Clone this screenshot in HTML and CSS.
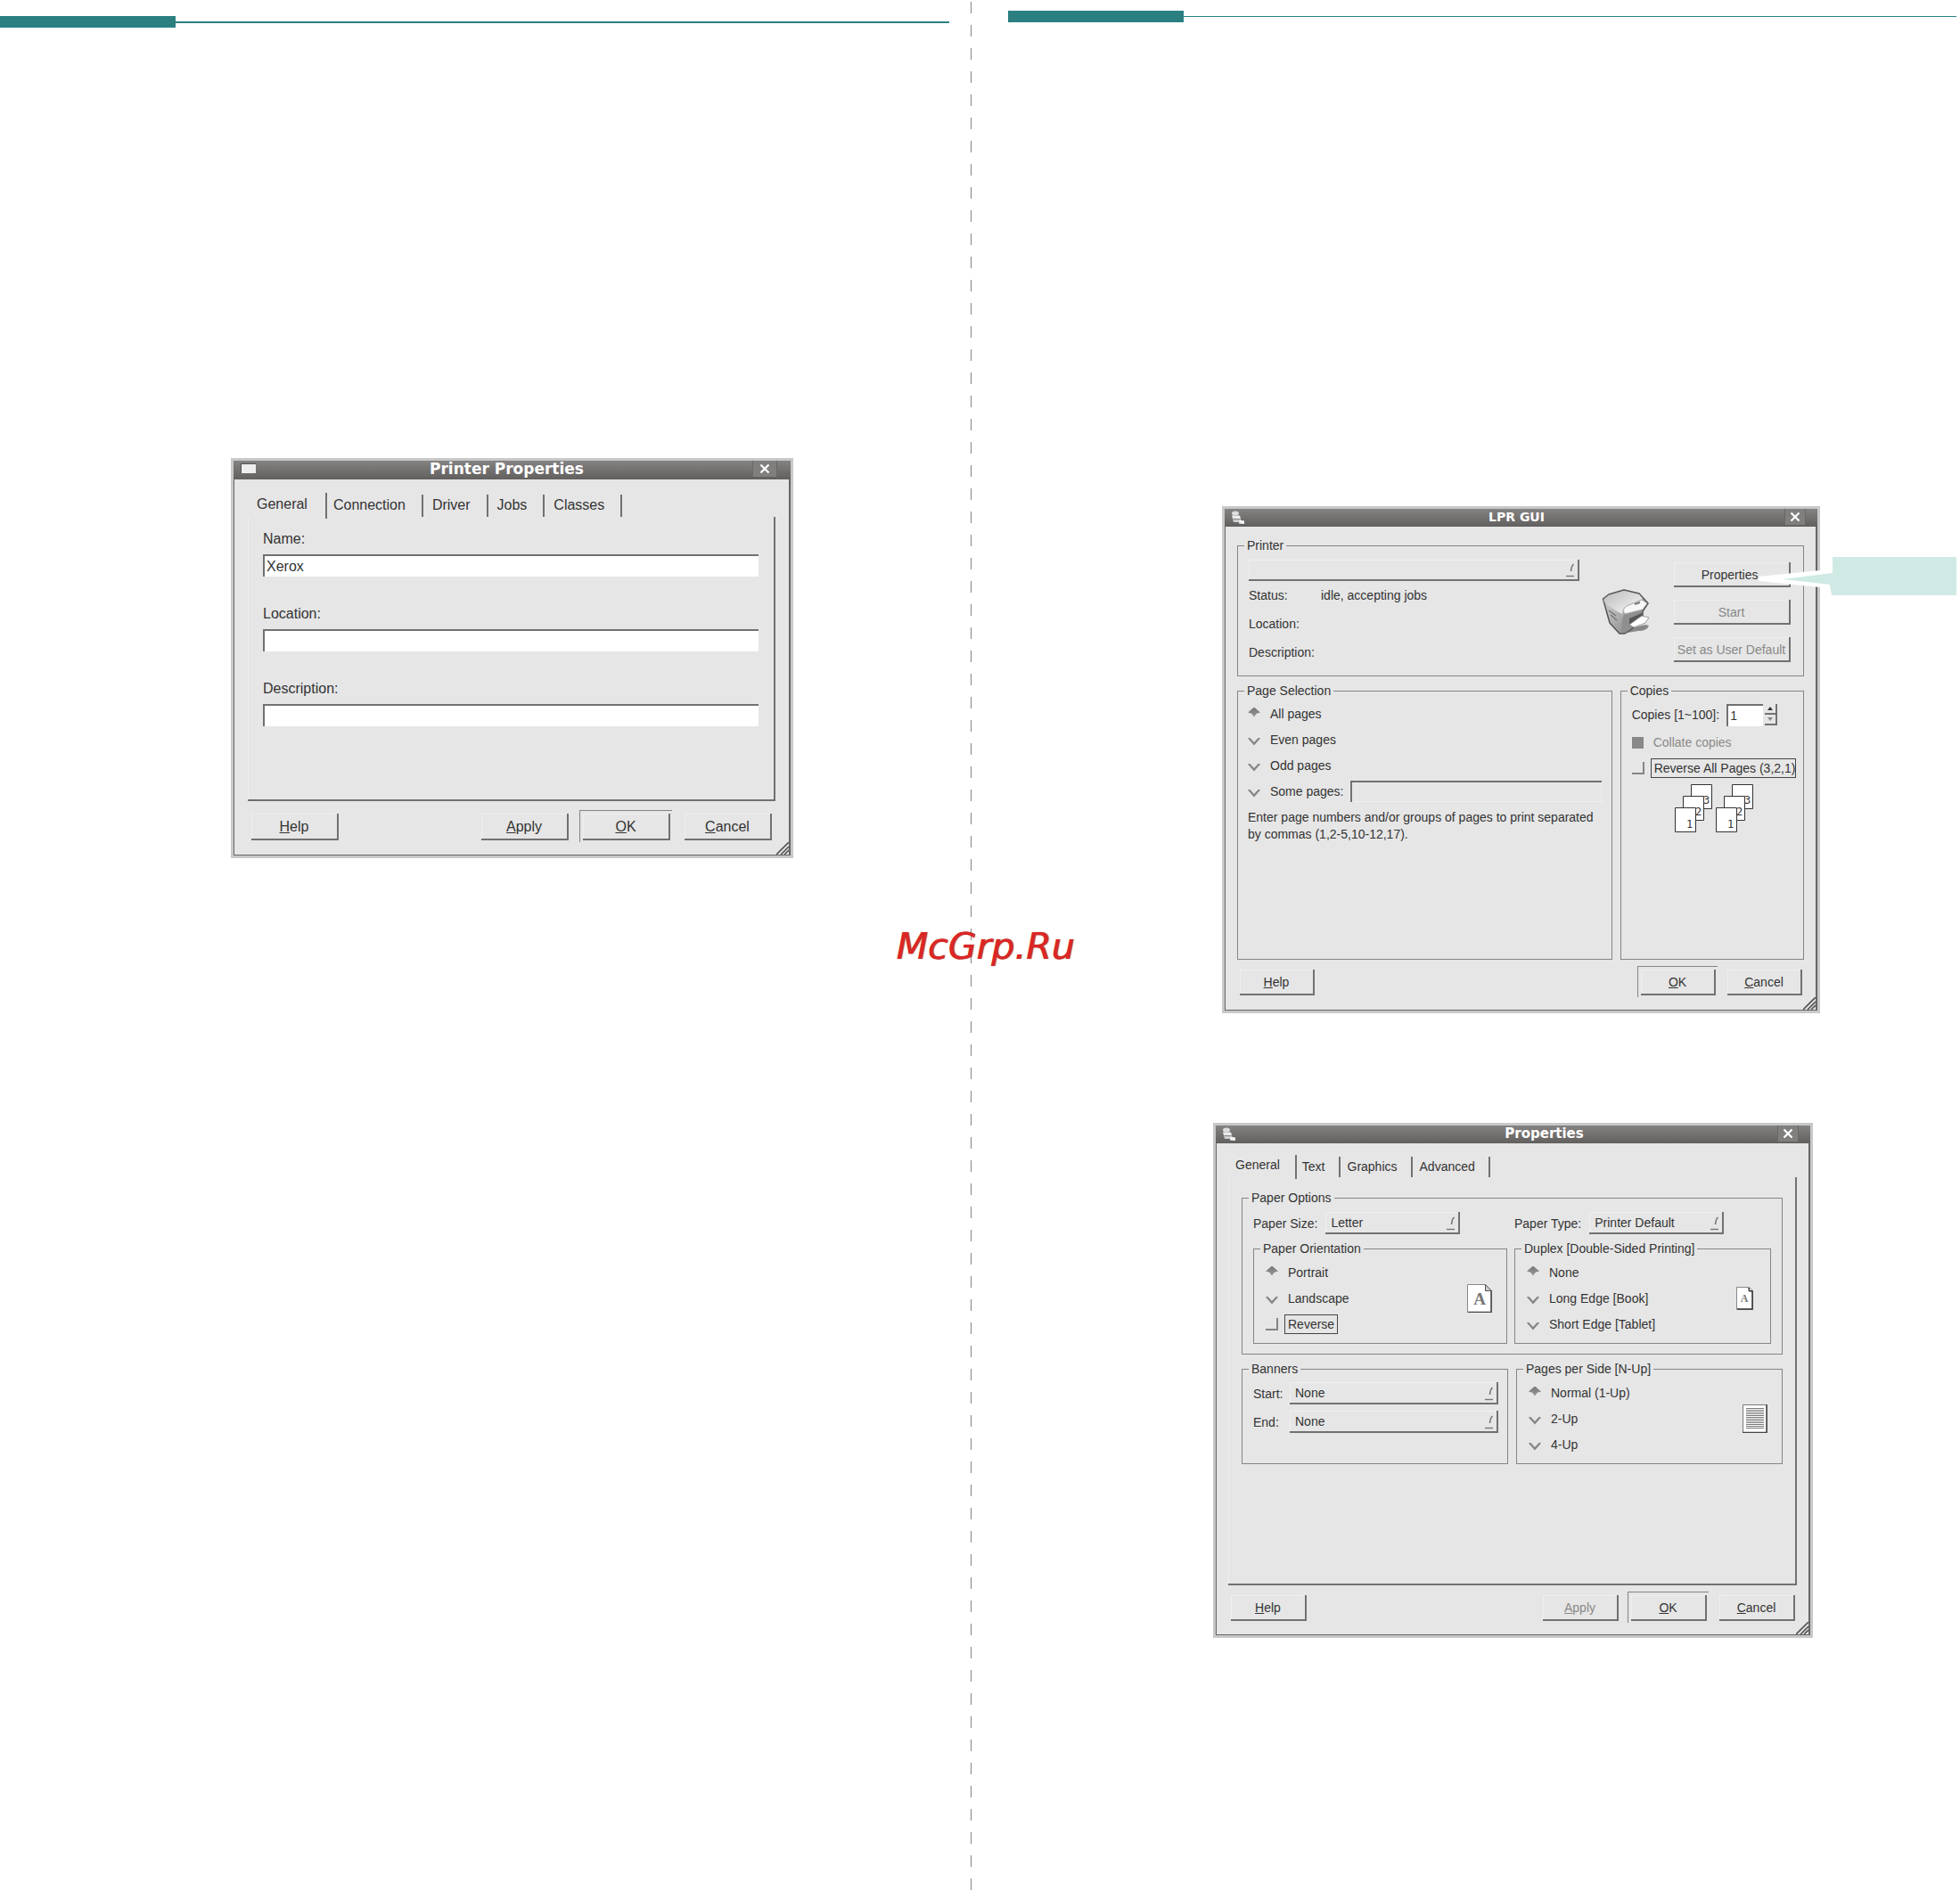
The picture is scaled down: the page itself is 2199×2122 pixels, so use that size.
FILE: index.html
```
<!DOCTYPE html>
<html lang="en">
<head>
<meta charset="utf-8">
<title>Printer configuration</title>
<link rel="stylesheet" href="styles.css">
</head>
<body>
<svg class="defs" aria-hidden="true">
  <symbol id="cross" viewBox="0 0 12 12"><path d="M1.5 1.5l9 9M10.5 1.5l-9 9" stroke="#fff" stroke-width="2.2" fill="none"/></symbol>
  <symbol id="arrow" viewBox="0 0 10 16"><path d="M8.5 1Q6 3 5.500 9" stroke="#777" stroke-width="1.6" fill="none"/><path d="M0 14.500H9" stroke="#777" stroke-width="1.4"/></symbol>
  <symbol id="grip" viewBox="0 0 14 14"><path d="M0 14L14 0M5 14L14 5M9 14L14 9" stroke="#555" stroke-width="1.6"/></symbol>
  <symbol id="app" viewBox="0 0 16 16">
    <ellipse cx="5" cy="3" rx="4" ry="2.500" fill="#ddd"/><path d="M1 5.500h9l1 3.500H2z" fill="#eee"/><path d="M2 9.500h9l1 3.500H3z" fill="#ccc"/><path d="M9.500 10.500l5.500 1v3.500l-6-.5z" fill="#f4f4f4"/><path d="M3 9.200l7 .5" stroke="#888"/>
  </symbol>
</svg>
<main class="spread">
  <section class="sheet sheet-left">
    <div class="rule"></div>
    <form class="window win-printer">
      <div class="frame">
        <header class="titlebar">
          <span class="menu-icon"></span>
          <h2>Printer Properties</h2>
          <button type="button" class="close" aria-label="Close"><svg><use href="#cross"/></svg></button>
        </header>
        <div class="body">
          <div class="tabs" role="tablist">
            <button type="button" role="tab" aria-selected="true">General</button>
            <button type="button" role="tab">Connection</button>
            <button type="button" role="tab">Driver</button>
            <button type="button" role="tab">Jobs</button>
            <button type="button" role="tab">Classes</button>
          </div>
          <div class="panel">
            <div class="field"><label for="name">Name:</label><input class="sunk" id="name" type="text" value="Xerox"></div>
            <div class="field"><label for="location">Location:</label><input class="sunk" id="location" type="text"></div>
            <div class="field"><label for="description">Description:</label><input class="sunk" id="description" type="text"></div>
          </div>
          <footer class="actions">
            <button type="button" class="push help"><u>H</u>elp</button>
            <button type="button" class="push"><u>A</u>pply</button>
            <button type="button" class="push default"><u>O</u>K</button>
            <button type="button" class="push"><u>C</u>ancel</button>
          </footer>
        </div>
        <svg class="grip"><use href="#grip"/></svg>
      </div>
    </form>
  </section>

  <section class="sheet sheet-right">
    <div class="rule rule-thin"></div>
    <form class="window win-lpr">
      <div class="frame">
        <header class="titlebar">
          <svg class="app-icon"><use href="#app"/></svg>
          <h2>LPR GUI</h2>
          <button type="button" class="close" aria-label="Close"><svg><use href="#cross"/></svg></button>
        </header>
        <div class="body">
          <fieldset>
            <legend>Printer</legend>
            <div class="printer">
              <div class="printer-info">
                <span class="combo"><select aria-label="Printer"><option></option></select><svg><use href="#arrow"/></svg></span>
                <dl>
                  <dt>Status:</dt><dd>idle, accepting jobs</dd>
                  <dt>Location:</dt><dd></dd>
                  <dt>Description:</dt><dd></dd>
                </dl>
              </div>
              <svg class="printer-art" viewBox="0 0 54 52" role="img" aria-label="Printer">
                <defs>
                  <linearGradient id="side" x1="0" y1="0" x2="1" y2="1"><stop offset="0" stop-color="#ddd"/><stop offset="1" stop-color="#777"/></linearGradient>
                  <linearGradient id="top" x1="0" y1="0" x2="1" y2="1"><stop offset="0" stop-color="#bbb"/><stop offset="1" stop-color="#fafafa"/></linearGradient>
                </defs>
                <path d="M27 45l22-5 4 1q-2 6-12 6l-12 2z" fill="#888"/>
                <path d="M1.500 11L8 6 25 1l17 4 10 11-6 9v9L32 46l-6 4h-6L9 38z" fill="url(#side)" stroke="#555" stroke-width="1.500" stroke-linejoin="round"/>
                <path d="M2.500 12L8 7l17-5 17 4 4 5-18 8q-4 2-5 9Q14 24 2.500 14z" fill="url(#top)"/>
                <path d="M24 24q2-5 9-7l12-5 6 4-5 7-20 5z" fill="#f7f7f7" stroke="#999" stroke-width=".8"/>
                <path d="M25 29l20-5v10L32 45l-6 4-4-2q0-10 3-18z" fill="#8f8f8f"/>
                <path d="M31 33l14-6v5l-14 8z" fill="#555"/>
                <path d="M31 40l14-10 8 2-4 6-13 5z" fill="#fff" stroke="#888" stroke-width=".8"/>
                <path d="M8 24l8 6M10 29l7 6" stroke="#777" stroke-width="1.500"/>
                <path d="M37 17l6-2" stroke="#777" stroke-width="2"/>
              </svg>
              <div class="printer-actions">
                <button type="button" class="push">Properties.</button>
                <button type="button" class="push" disabled>Start</button>
                <button type="button" class="push" disabled>Set as User Default</button>
              </div>
            </div>
          </fieldset>
          <div class="groups">
            <fieldset>
              <legend>Page Selection</legend>
              <div class="choices">
                <label class="choice"><input type="radio" name="pages" checked>All pages</label>
                <label class="choice"><input type="radio" name="pages">Even pages</label>
                <label class="choice"><input type="radio" name="pages">Odd pages</label>
                <div class="some"><label class="choice"><input type="radio" name="pages">Some pages:</label><input class="sunk flat" type="text" aria-label="Page range"></div>
                <p>Enter page numbers and/or groups of pages to print separated by commas (1,2-5,10-12,17).</p>
              </div>
            </fieldset>
            <fieldset>
              <legend>Copies</legend>
              <div class="copies">
                <div class="count">
                  <label for="copies">Copies [1~100]:</label>
                  <input class="sunk" id="copies" type="text" value="1">
                  <span class="spin">
                    <button type="button" aria-label="More"><svg viewBox="0 0 6 4"><path d="M0 4h6L3 0z" fill="#333"/></svg></button>
                    <button type="button" aria-label="Fewer"><svg viewBox="0 0 6 4"><path d="M0 0h6L3 4z" fill="#888"/></svg></button>
                  </span>
                </div>
                <label class="choice collate"><input type="checkbox" checked disabled>Collate copies</label>
                <label class="choice"><input type="checkbox"><span class="focus">Reverse All Pages (3,2,1)</span></label>
                <div class="stacks">
                  <svg viewBox="0 0 42 54">
                    <path d="M18.500.500h23v27h-23z" class="leaf"/><text x="32" y="22" class="digit">3</text>
                    <path d="M9.500 13.500h23v27h-23z" class="leaf"/><text x="23" y="35" class="digit">2</text>
                    <path d="M.5 26.500h23v27H.5z" class="leaf"/><text x="13" y="49" class="digit">1</text>
                  </svg>
                  <svg viewBox="0 0 42 54">
                    <path d="M18.500.500h23v27h-23z" class="leaf"/><text x="32" y="22" class="digit">3</text>
                    <path d="M9.500 13.500h23v27h-23z" class="leaf"/><text x="23" y="35" class="digit">2</text>
                    <path d="M.5 26.500h23v27H.5z" class="leaf"/><text x="13" y="49" class="digit">1</text>
                  </svg>
                </div>
              </div>
            </fieldset>
          </div>
          <footer class="actions">
            <button type="button" class="push help"><u>H</u>elp</button>
            <button type="button" class="push default"><u>O</u>K</button>
            <button type="button" class="push"><u>C</u>ancel</button>
          </footer>
        </div>
        <svg class="grip"><use href="#grip"/></svg>
      </div>
      <svg class="callout" viewBox="0 0 222 44" aria-hidden="true">
        <path d="M0 22L69 15h12v19H69L0 27z" fill="#fff"/>
        <path d="M27 25l56-7V0h139v43H82l-2-12z" fill="#cfeae4"/>
      </svg>
    </form>

    <form class="window win-props">
      <div class="frame">
        <header class="titlebar">
          <svg class="app-icon"><use href="#app"/></svg>
          <h2>Properties</h2>
          <button type="button" class="close" aria-label="Close"><svg><use href="#cross"/></svg></button>
        </header>
        <div class="body">
          <div class="tabs" role="tablist">
            <button type="button" role="tab" aria-selected="true">General</button>
            <button type="button" role="tab">Text</button>
            <button type="button" role="tab">Graphics</button>
            <button type="button" role="tab">Advanced</button>
          </div>
          <div class="panel">
            <fieldset>
              <legend>Paper Options</legend>
              <div class="paper">
                <div class="pick"><label for="size">Paper Size:</label><span class="combo"><select id="size"><option>Letter</option></select><svg><use href="#arrow"/></svg></span></div>
                <div class="pick"><label for="type">Paper Type:</label><span class="combo"><select id="type"><option>Printer Default</option></select><svg><use href="#arrow"/></svg></span></div>
                <fieldset>
                  <legend>Paper Orientation</legend>
                  <div class="options">
                    <div>
                      <label class="choice"><input type="radio" name="orient" checked>Portrait</label>
                      <label class="choice"><input type="radio" name="orient">Landscape</label>
                      <label class="choice"><input type="checkbox"><span class="focus">Reverse</span></label>
                    </div>
                    <svg class="page-a" viewBox="0 0 28 32"><path d="M.5.500h20l7 7v24H.5z" fill="#fff" stroke="#888"/><path d="M27 7v24.500H1" fill="none" stroke="#444" stroke-width="1.500"/><path d="M20.500.500v7h7z" fill="#ccc" stroke="#555"/><text x="14" y="23" text-anchor="middle" class="letter">A</text></svg>
                  </div>
                </fieldset>
                <fieldset>
                  <legend>Duplex [Double-Sided Printing]</legend>
                  <div class="options">
                    <div>
                      <label class="choice"><input type="radio" name="duplex" checked>None</label>
                      <label class="choice"><input type="radio" name="duplex">Long Edge [Book]</label>
                      <label class="choice"><input type="radio" name="duplex">Short Edge [Tablet]</label>
                    </div>
                    <svg class="page-b" viewBox="0 0 19 26"><path d="M.5.500h14l4 4v21H.5z" fill="#fff" stroke="#888"/><path d="M14 1l.5 3.500 3.500.5v20H1" fill="none" stroke="#333" stroke-width="1.500"/><text x="9" y="17" text-anchor="middle" class="letter letter-small">A</text></svg>
                  </div>
                </fieldset>
              </div>
            </fieldset>
            <div class="groups">
              <fieldset>
                <legend>Banners</legend>
                <div class="banners">
                  <label for="start">Start:</label><span class="combo"><select id="start"><option>None</option></select><svg><use href="#arrow"/></svg></span>
                  <label for="end">End:</label><span class="combo"><select id="end"><option>None</option></select><svg><use href="#arrow"/></svg></span>
                </div>
              </fieldset>
              <fieldset>
                <legend>Pages per Side [N-Up]</legend>
                <div class="options nup">
                  <div>
                    <label class="choice"><input type="radio" name="nup" checked>Normal (1-Up)</label>
                    <label class="choice"><input type="radio" name="nup">2-Up</label>
                    <label class="choice"><input type="radio" name="nup">4-Up</label>
                  </div>
                  <svg class="page-a" viewBox="0 0 28 32"><path d="M.5.500h27v31H.5z" fill="#fff" stroke="#777"/><path d="M27 0v31.500H0" fill="none" stroke="#444" stroke-width="1.500"/><path d="M4 4.500h20M4 6.500h20M4 8.500h20M4 10.500h20M4 12.500h20M4 14.500h20M4 16.500h20M4 18.500h20M4 20.500h20M4 22.500h20M4 24.500h20M4 26.500h20" stroke="#777"/></svg>
                </div>
              </fieldset>
            </div>
          </div>
          <footer class="actions">
            <button type="button" class="push help"><u>H</u>elp</button>
            <button type="button" class="push" disabled><u>A</u>pply</button>
            <button type="button" class="push default"><u>O</u>K</button>
            <button type="button" class="push"><u>C</u>ancel</button>
          </footer>
        </div>
        <svg class="grip"><use href="#grip"/></svg>
      </div>
    </form>
  </section>
  <p class="watermark">McGrp.Ru</p>
</main>
</body>
</html>
```

FILE: styles.css
```
:root {
  --teal: #2b7f80;
  --face: #e6e6e6;
  --line: #858585;
  --shade: #717171;
  --light: #efefef;
  --ink: #333;
}

* { box-sizing: border-box; }

body {
  margin: 0;
  background: #fff;
  color: var(--ink);
  font-family: "Liberation Sans", Arial, sans-serif;
  font-size: 14px;
  line-height: 16px;
}

button, input, select { font: inherit; color: inherit; margin: 0; }
button { background: none; border: 0; padding: 0; }
h2, p, dl, dd { margin: 0; }
.defs { position: absolute; width: 0; height: 0; }

/* Two facing pages with a dashed fold between them */
.spread {
  position: relative;
  display: grid;
  grid-template-columns: 1089fr 1110fr;
  min-height: 100vh;
}
.sheet-left { padding: 18px 24px 0 0; }
.sheet-right {
  padding: 12px 4px 0 42px;
  background: repeating-linear-gradient(#858585 0 13px, transparent 13px 26px) 0 2px / 1px 100% no-repeat;
}

.rule {
  height: 13px;
  background:
    linear-gradient(var(--teal), var(--teal)) 0 0 / 197px 13px no-repeat,
    linear-gradient(var(--teal), var(--teal)) 0 6px / 100% 2px no-repeat;
}
.rule-thin { background-size: 197px 13px, 100% 1px; }

.watermark {
  position: absolute;
  top: 1038px;
  left: calc(50% - 94px);
  font: italic 41px/48px "DejaVu Sans", sans-serif;
  color: #dc2626;
  text-shadow: 1px 0 1px #8a2a2a;
}

/* Windows */
.window { position: relative; border: 3px solid #c8c8c8; }
.frame {
  position: relative;
  background: var(--face);
  border: solid #666;
  border-width: 0 2px 1px 1px;
}
.win-printer { width: 631px; margin: 483px 0 0 259px; font-size: 16px; line-height: 20px; }
.win-lpr { width: 671px; margin: 543px 0 0 240px; }
.win-props { width: 673px; margin: 123px 0 0 230px; }

.titlebar {
  display: flex;
  height: 20px;
  margin: 0 -2px 0 -1px;
  padding-right: 13px;
  background: linear-gradient(#858282, #625f5f);
  color: #fff;
}
.titlebar h2 {
  flex: 1;
  text-align: center;
  font: bold 14px/18px "DejaVu Sans", sans-serif;
}
.win-printer .titlebar { height: 21px; padding-right: 15px; }
.win-printer h2 { font-size: 17px; }
.win-props h2 { font-size: 15px; padding-left: 80px; }
.menu-icon {
  width: 17px;
  height: 11px;
  margin: 3px 6px 0 8px;
  background: #eee;
  border: solid #555;
  border-width: 1px 0 0 1px;
}
.app-icon { width: 16px; height: 16px; margin: 2px 4px 0 7px; }
.close {
  display: grid;
  place-items: center;
  width: 24px;
  height: 18px;
  background: #817e7e;
  border: solid #6a6767;
  border-width: 0 1px;
}
.win-printer .close { width: 28px; }
.close svg { width: 12px; height: 12px; }

.body { padding: 13px 13px 16px 13px; }
.win-printer .body { padding: 15px 15px 16px 15px; }
.win-props .body { padding: 13px 13px 15px 13px; }
.grip { position: absolute; right: 0; bottom: 0; width: 14px; height: 14px; }

/* Tabs */
.tabs { display: flex; align-items: flex-end; height: 25px; }
.win-printer .tabs { height: 27px; }
.tabs button {
  height: 23px;
  padding: 0 15px 2px 8px;
  border-right: 2px solid var(--shade);
}
.tabs [aria-selected="true"] {
  height: 27px;
  margin: 0 -2px -2px 0;
  padding: 0 17px 5px 8px;
}
.win-printer .tabs button { height: 25px; padding: 0 18px 2px 10px; }
.win-printer .tabs [aria-selected="true"] { height: 29px; margin-right: -3px; padding: 0 20px 4px 10px; }
.panel {
  min-height: 458px;
  padding: 15px 14px 15px 15px;
  border: solid var(--shade);
  border-width: 0 2px 2px 0;
  box-shadow: inset 1px 0 var(--light);
}
.win-printer .panel { min-height: 319px; padding: 15px 17px 0 17px; display: grid; gap: 32px; align-content: start; }
.field { display: grid; gap: 7px; }

/* Controls */
.sunk {
  width: 100%;
  height: 25px;
  padding: 0 2px;
  background: #fff;
  border: solid var(--shade);
  border-width: 2px 0 0 2px;
  border-radius: 0;
}
.sunk.flat { height: 24px; background: var(--face); box-shadow: inset -1px -1px var(--light); }

.push {
  position: relative;
  width: 85px;
  height: 29px;
  padding-top: 1px;
  border: solid var(--shade);
  border-width: 0 2px 2px 0;
  box-shadow: inset 1px 1px var(--light);
}
.push:disabled { color: #888; }
.default::before {
  content: "";
  position: absolute;
  inset: -4px -4px -4px -4px;
  border: solid var(--line);
  border-width: 1px 0 0 1px;
}
.actions { display: flex; gap: 14px; padding: 11px 2px 0 3px; }
.help { margin-right: auto; }
.win-printer .push { width: 98px; height: 30px; }
.win-printer .actions { gap: 16px; padding: 14px 4px 0 4px; }
.win-lpr .actions { gap: 13px; padding: 11px 2px 0 3px; }
.win-lpr .actions .push { width: 84px; }

.combo { position: relative; display: block; }
.combo select {
  display: block;
  width: 100%;
  height: 25px;
  padding: 0 6px;
  appearance: none;
  background: none;
  border: solid var(--shade);
  border-width: 0 2px 2px 0;
  border-radius: 0;
  box-shadow: inset 1px 1px var(--light);
}
.combo svg { position: absolute; right: 5px; bottom: 4px; width: 10px; height: 16px; pointer-events: none; }

.choice { display: flex; align-items: center; gap: 11px; height: 29px; white-space: nowrap; }
.choice input { flex: none; width: 14px; height: 14px; appearance: none; }
.choice [type="radio"]:checked {
  height: 11px;
  margin-bottom: 3px;
  background: linear-gradient(#777, #999);
  clip-path: polygon(50% 0, 100% 55%, 70% 65%, 50% 100%, 30% 65%, 0 55%);
}
.choice [type="radio"]:not(:checked) {
  height: 9px;
  margin-top: 5px;
  background: #858585;
  clip-path: polygon(0 10%, 14% 0, 50% 62%, 86% 0, 100% 10%, 50% 100%);
}
.choice [type="checkbox"] { border: solid #858585; border-width: 0 2px 2px 0; }
.choice [type="checkbox"]:checked { width: 13px; height: 13px; border: 0; background: #888; }
.focus { margin-left: -4px; padding: 2px 3px; border: 1px solid #444; }

/* Group boxes */
fieldset { min-width: 0; margin: 0; padding: 0; border: 1px solid var(--line); }
legend { margin-left: 7px; padding: 0 3px; }
.groups { display: grid; gap: 9px; margin-top: 8px; }
.win-lpr .groups { grid-template-columns: 422fr 207fr; }
.win-lpr .groups fieldset { height: 310px; }
.win-props .groups { grid-template-columns: 1fr 1fr; }

.printer { display: grid; grid-template-columns: 371px 1fr 131px; padding: 8px 14px 10px 12px; }
.printer .combo select { height: 24px; }
.printer dl { display: grid; grid-template-columns: 81px 1fr; grid-auto-rows: 32px; align-items: center; }
.printer-art { width: 54px; height: 52px; margin: 33px 0 0 25px; }
.printer-actions { display: grid; gap: 14px; align-content: start; padding-top: 3px; }
.printer-actions .push { width: 100%; height: 28px; padding-top: 2px; white-space: nowrap; }

.choices { padding: 3px 11px 0; }
.some { display: flex; align-items: center; gap: 7px; }
.choices p { margin-top: 6px; line-height: 19px; }

.copies { padding: 4px 0 0 12px; }
.count { display: flex; align-items: center; height: 30px; }
.count .sunk { width: 41px; margin: 0 2px 0 8px; }
.spin { display: grid; grid-template-rows: 12px 12px; width: 14px; }
.spin button { display: grid; place-items: center; border: solid var(--shade); border-width: 0 2px 2px 0; }
.spin svg { width: 6px; height: 4px; }
.collate { height: 32px; color: #8a8a8a; }
.copies .choice:not(.collate) { height: 26px; }
.copies .focus { padding: 2px 0 2px 3px; }
.stacks { display: flex; gap: 4px; margin: 5px 0 0 48px; }
.stacks svg { width: 42px; height: 54px; }
.leaf { fill: #fff; stroke: #333; }
.digit { font: 12px "DejaVu Sans Mono", monospace; fill: #333; }

.paper { display: grid; grid-template-columns: 286fr 289fr; gap: 8px; padding: 8px 12px 11px 12px; }
.pick { display: flex; align-items: center; gap: 9px; }
.pick .combo { width: 151px; }
.options { display: flex; justify-content: space-between; align-items: center; padding: 4px 16px 7px 13px; }
.paper fieldset:last-child .options { padding-right: 19px; }
.page-a { width: 28px; height: 32px; }
.page-b { width: 19px; height: 26px; }
.letter { font: bold 19px "Liberation Serif", serif; fill: #777; }
.letter-small { font-size: 12px; }
.banners { display: grid; grid-template-columns: 41px 1fr; gap: 7px 0; align-items: center; padding: 7px 10px 0 12px; }

/* Callout pointing at the Properties button */
.callout { position: absolute; top: 54px; left: 599px; width: 222px; height: 44px; }
```
